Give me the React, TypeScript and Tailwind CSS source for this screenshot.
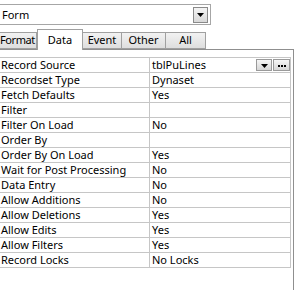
const rows: [string, string][] = [
  ["Record Source", "tblPuLines"],
  ["Recordset Type", "Dynaset"],
  ["Fetch Defaults", "Yes"],
  ["Filter", ""],
  ["Filter On Load", "No"],
  ["Order By", ""],
  ["Order By On Load", "Yes"],
  ["Wait for Post Processing", "No"],
  ["Data Entry", "No"],
  ["Allow Additions", "No"],
  ["Allow Deletions", "Yes"],
  ["Allow Edits", "Yes"],
  ["Allow Filters", "Yes"],
  ["Record Locks", "No Locks"],
];

const tabs = [
  { label: "Format", w: "w-[38px] justify-start pl-[1px] tracking-[-0.4px]" },
  { label: "Data", w: "w-[46px]" },
  { label: "Event", w: "w-[40px] justify-center" },
  { label: "Other", w: "w-[45px] justify-center" },
  { label: "All", w: "w-[41px] justify-center" },
];

function DownArrow() {
  return (
    <svg width="7" height="4" viewBox="0 0 7 4">
      <path d="M0 0h7L3.5 4z" fill="#000" />
    </svg>
  );
}

export default function App() {
  return (
    <div
      className="relative w-[297px] h-[290px] overflow-hidden bg-white text-[11px] text-black"
      style={{ fontFamily: '"Noto Sans", "Open Sans", sans-serif' }}
    >
      {/* object picker */}
      <div className="ml-[-1px] mt-[4px] flex h-[21px] w-[212px] items-center justify-between border border-[#a6a6a6] pl-[2px] pr-[2px]">
        <span className="leading-none">Form</span>
        <div className="flex h-[16px] w-[15px] items-center justify-center border border-[#8a8a8a] bg-gradient-to-b from-[#f4f4f4] to-[#d8d8d8]">
          <DownArrow />
        </div>
      </div>

      {/* tabs */}
      <div className="relative z-10 mt-[4px] flex items-end">
        {tabs.map((t) =>
          t.label === "Data" ? (
            <div
              key={t.label}
              className={`${t.w} -mb-px flex h-[21px] items-start justify-center border border-b-0 border-[#a0a0a0] bg-white pt-[2px]`}
            >
              {t.label}
            </div>
          ) : (
            <div
              key={t.label}
              className={`${t.w} -ml-px flex h-[17px] items-center whitespace-nowrap border border-[#a0a0a0] bg-gradient-to-b from-[#f2f2f2] to-[#dedede] first:ml-[-1px] first:border-l-0`}
            >
              {t.label}
            </div>
          )
        )}
      </div>

      {/* property sheet */}
      <div className="ml-[-1px] h-[260px] w-[295px] border-t border-r border-[#8f8f8f] pt-[7px] pr-[2px]">
        <div className="ml-px border-t border-r border-[#c6c6c6]">
          {rows.map(([label, value], i) => (
            <div key={label} className="flex h-[15px] border-b border-[#c6c6c6] leading-[14px]">
              <div className="w-[150px] shrink-0 truncate border-r border-[#c6c6c6] pl-[1px]">{label}</div>
              <div className="flex flex-1 items-center justify-between pl-[2px]">
                <span>{value}</span>
                {i === 0 && (
                  <div className="flex items-center gap-px">
                    <div className="flex h-[12px] w-[16px] items-end justify-center border border-[#9a9a9a] bg-gradient-to-b from-[#f6f6f6] to-[#d6d6d6] pb-[2px]">
                      <DownArrow />
                    </div>
                    <div className="flex h-[12px] w-[17px] items-center justify-center gap-[1px] border border-[#9a9a9a] bg-gradient-to-b from-[#f6f6f6] to-[#d6d6d6] pt-[2px]">
                      <span className="h-[2px] w-[2px] bg-black" />
                      <span className="h-[2px] w-[2px] bg-black" />
                      <span className="h-[2px] w-[2px] bg-black" />
                    </div>
                  </div>
                )}
              </div>
            </div>
          ))}
        </div>
      </div>
    </div>
  );
}
